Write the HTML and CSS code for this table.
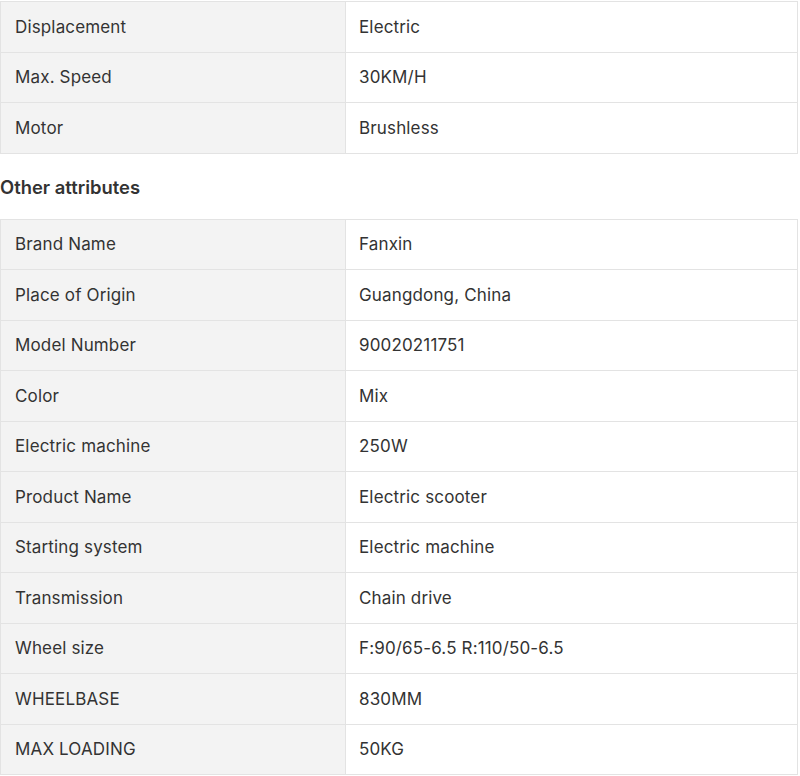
FILE: index.html
```html
<!DOCTYPE html>
<html>
<head>
<meta charset="utf-8">
<link rel="stylesheet" href="styles.css">
</head>
<body>
<div class="page">
  <table class="attrs">
    <tr><td class="k">Displacement</td><td class="v">Electric</td></tr>
    <tr><td class="k">Max. Speed</td><td class="v">30KM/H</td></tr>
    <tr><td class="k">Motor</td><td class="v">Brushless</td></tr>
  </table>
  <div class="heading">Other attributes</div>
  <table class="attrs">
    <tr><td class="k">Brand Name</td><td class="v">Fanxin</td></tr>
    <tr><td class="k">Place of Origin</td><td class="v">Guangdong, China</td></tr>
    <tr><td class="k">Model Number</td><td class="v">90020211751</td></tr>
    <tr><td class="k">Color</td><td class="v">Mix</td></tr>
    <tr><td class="k">Electric machine</td><td class="v">250W</td></tr>
    <tr><td class="k">Product Name</td><td class="v">Electric scooter</td></tr>
    <tr><td class="k">Starting system</td><td class="v">Electric machine</td></tr>
    <tr><td class="k">Transmission</td><td class="v">Chain drive</td></tr>
    <tr><td class="k">Wheel size</td><td class="v">F:90/65-6.5 R:110/50-6.5</td></tr>
    <tr><td class="k">WHEELBASE</td><td class="v">830MM</td></tr>
    <tr><td class="k">MAX LOADING</td><td class="v">50KG</td></tr>
  </table>
</div>
</body>
</html>
```
FILE: styles.css
```css
html, body {
  margin: 0;
  padding: 0;
  background: #fff;
}
.page {
  padding-top: 1px;
  width: 798px;
  font-family: Inter, "Noto Sans", sans-serif;
  color: #333;
  font-size: 17px;
  letter-spacing: 0.15px;
}
.attrs {
  width: 798px;
  border-collapse: collapse;
  table-layout: fixed;
}
.attrs td {
  border: 1px solid #e3e3e3;
  padding: 15.5px 14px 14.5px;
  line-height: 19.5px;
  vertical-align: middle;
}
.attrs td.k {
  width: 316px;
  background: #f3f3f3;
}
.attrs td.v {
  background: #fff;
  padding-left: 13px;
}
.heading {
  font-size: 18.4px;
  font-weight: 600;
  line-height: 24px;
  padding: 21px 0 20px 0;
  color: #333;
  letter-spacing: 0;
}
```
